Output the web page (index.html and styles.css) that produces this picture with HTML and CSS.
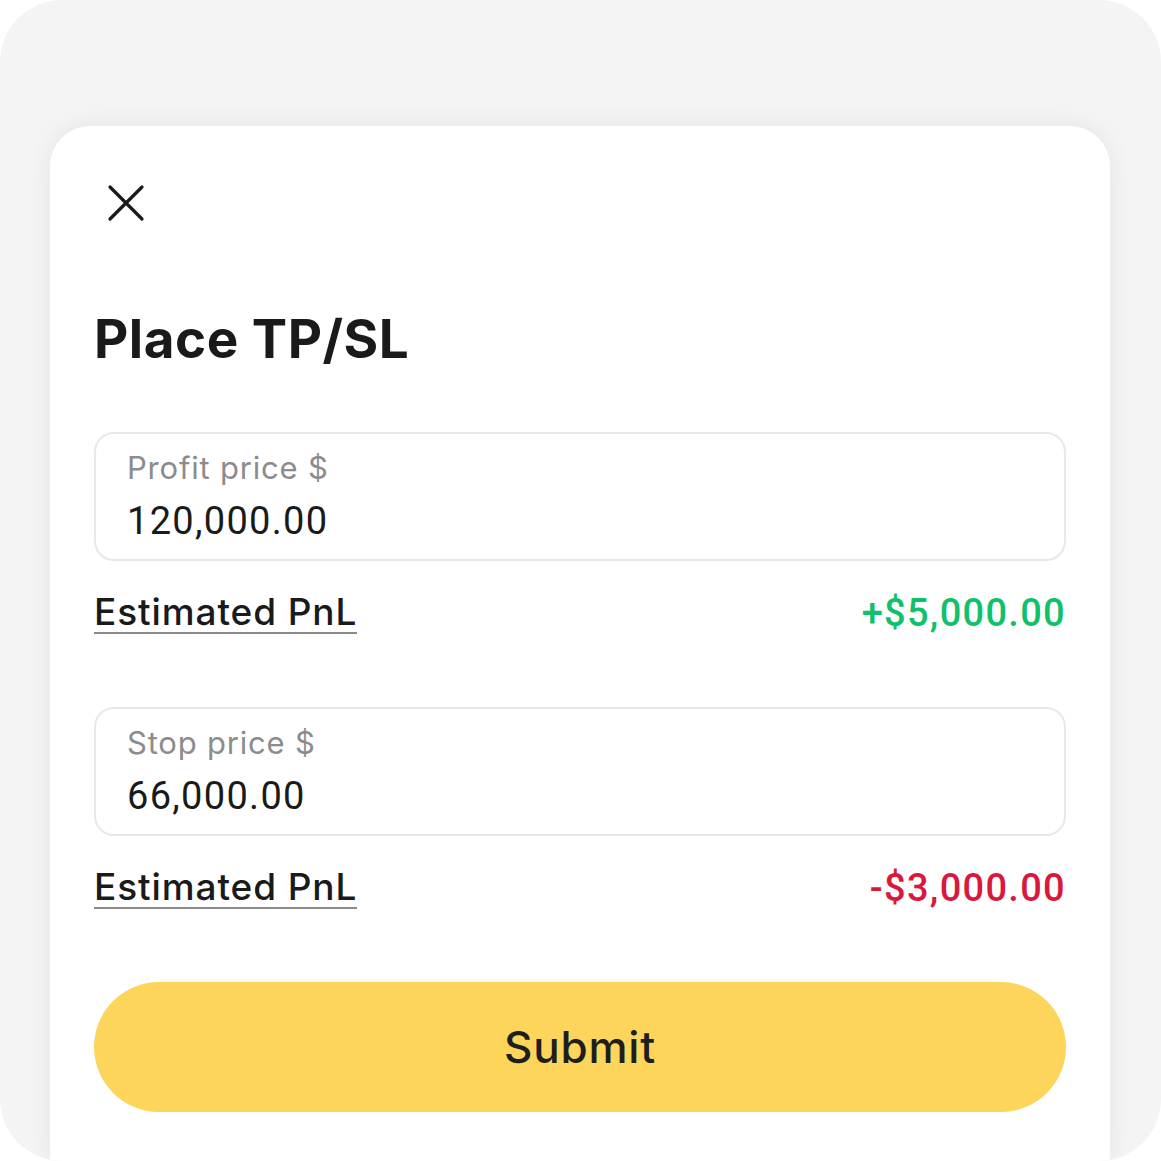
FILE: index.html
```html
<!DOCTYPE html>
<html lang="en">
<head>
    <meta charset="UTF-8">
    <meta name="viewport" content="width=device-width, initial-scale=1.0">
    <link rel="stylesheet" href="styles.css">
    <title>Place TP/SL</title>
</head>
<body>
    <div class="frame">
        <div class="sheet">
            <button class="close-button" aria-label="Close">
                <svg width="38" height="38" viewBox="0 0 38 38">
                    <path d="M3 3 L35 35 M35 3 L3 35" stroke="#1a1a1a" stroke-width="3.2" stroke-linecap="round" fill="none"/>
                </svg>
            </button>

            <h1 class="title">Place TP/SL</h1>

            <div class="field">
                <div class="field-label">Profit price $</div>
                <div class="field-value">120,000.00</div>
            </div>
            <div class="pnl-row">
                <span class="pnl-label">Estimated PnL</span>
                <span class="pnl-value profit">+$5,000.00</span>
            </div>

            <div class="field second">
                <div class="field-label">Stop price $</div>
                <div class="field-value">66,000.00</div>
            </div>
            <div class="pnl-row">
                <span class="pnl-label">Estimated PnL</span>
                <span class="pnl-value loss">-$3,000.00</span>
            </div>

            <button class="submit-button">Submit</button>
        </div>
    </div>
</body>
</html>
```

FILE: styles.css
```css
body {
    margin: 0;
    padding: 0;
    background-color: #ffffff;
    font-family: Inter, "Noto Sans", sans-serif;
    color: #1a1a1a;
}

.frame {
    width: 1161px;
    height: 1161px;
    background-color: #f4f4f4;
    border-radius: 62px;
    overflow: hidden;
    padding-top: 126px;
    box-sizing: border-box;
}

.sheet {
    margin: 0 51px 0 50px;
    height: 1035px;
    background-color: #ffffff;
    border-radius: 40px 40px 0 0;
    box-shadow: 0 0 24px rgba(0, 0, 0, 0.07);
    padding: 58px 44px 0 44px;
    box-sizing: border-box;
}

.close-button {
    display: block;
    background: none;
    border: 0;
    padding: 0;
    margin-left: 13px;
    width: 38px;
    height: 38px;
    cursor: pointer;
}

.title {
    font-size: 53px;
    font-weight: 700;
    letter-spacing: 0.5px;
    margin: 87px 0 63px 0;
    line-height: 60px;
}

.field {
    height: 129px;
    border: 2px solid #e8e8e8;
    border-radius: 20px;
    box-sizing: border-box;
    padding: 14px 30px 0 31px;
}

.field.second {
    margin-top: 72px;
}

.field-label {
    font-size: 31px;
    letter-spacing: 0.8px;
    color: #8c8c8c;
    line-height: 40px;
}

.field-value {
    font-family: Roboto, sans-serif;
    font-size: 38px;
    letter-spacing: 1.3px;
    line-height: 50px;
    margin-top: 8px;
    color: #1a1a1a;
}

.pnl-row {
    display: flex;
    justify-content: space-between;
    align-items: center;
    margin-top: 30px;
    height: 44px;
}

.pnl-label {
    font-size: 37px;
    font-weight: 500;
    letter-spacing: 0.9px;
    border-bottom: 2px solid #8a8a8a;
    line-height: 40px;
}

.pnl-value {
    font-family: Roboto, sans-serif;
    font-size: 38px;
    font-weight: 500;
    letter-spacing: 1.3px;
}

.profit {
    color: #10c06a;
}

.loss {
    color: #d9183b;
}

.submit-button {
    display: block;
    width: 100%;
    height: 130px;
    margin-top: 72px;
    border: 0;
    border-radius: 65px;
    background-color: #fcd55a;
    font-family: Inter, "Noto Sans", sans-serif;
    font-size: 44px;
    font-weight: 500;
    letter-spacing: 0.8px;
    color: #1e1e1e;
    cursor: pointer;
}
```
